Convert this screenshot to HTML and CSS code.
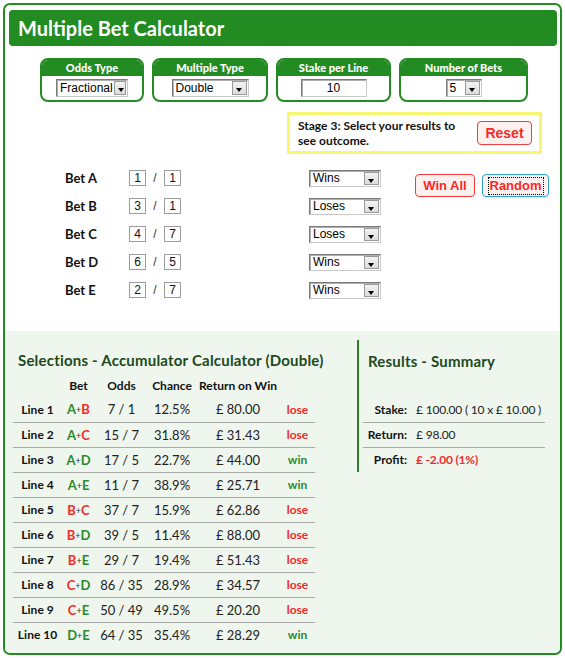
FILE: index.html
```html
<!DOCTYPE html>
<html>
<head>
<meta charset="utf-8">
<link rel="stylesheet" href="styles.css">
</head>
<body>
<div class="calc">
  <div class="header"><h1>Multiple Bet Calculator</h1></div>

  <div class="options">
    <div class="opt opt-1">
      <div class="opt-h">Odds Type</div>
      <div class="opt-b"><div class="sel sel-odds"><span class="sel-val">Fractional</span><span class="sel-btn"></span></div></div>
    </div>
    <div class="opt opt-2">
      <div class="opt-h">Multiple Type</div>
      <div class="opt-b"><div class="sel sel-mult"><span class="sel-val">Double</span><span class="sel-btn"></span></div></div>
    </div>
    <div class="opt opt-3">
      <div class="opt-h">Stake per Line</div>
      <div class="opt-b"><div class="stake">10</div></div>
    </div>
    <div class="opt opt-4">
      <div class="opt-h">Number of Bets</div>
      <div class="opt-b"><div class="sel sel-num"><span class="sel-val">5</span><span class="sel-btn"></span></div></div>
    </div>
  </div>

  <div class="stage-row">
    <div class="stage">
      <div class="stage-text">Stage 3: Select your results to see outcome.</div>
      <button class="btn btn-red btn-reset">Reset</button>
    </div>
  </div>

  <div class="bets-area">
    <div class="bet-list">
      <div class="bet-row"><span class="bet-label">Bet A</span><span class="frac"><span class="fin">1</span><span class="slash">/</span><span class="fin">1</span></span><div class="sel sel-res"><span class="sel-val">Wins</span><span class="sel-btn"></span></div></div>
      <div class="bet-row"><span class="bet-label">Bet B</span><span class="frac"><span class="fin">3</span><span class="slash">/</span><span class="fin">1</span></span><div class="sel sel-res"><span class="sel-val">Loses</span><span class="sel-btn"></span></div></div>
      <div class="bet-row"><span class="bet-label">Bet C</span><span class="frac"><span class="fin">4</span><span class="slash">/</span><span class="fin">7</span></span><div class="sel sel-res"><span class="sel-val">Loses</span><span class="sel-btn"></span></div></div>
      <div class="bet-row"><span class="bet-label">Bet D</span><span class="frac"><span class="fin">6</span><span class="slash">/</span><span class="fin">5</span></span><div class="sel sel-res"><span class="sel-val">Wins</span><span class="sel-btn"></span></div></div>
      <div class="bet-row"><span class="bet-label">Bet E</span><span class="frac"><span class="fin">2</span><span class="slash">/</span><span class="fin">7</span></span><div class="sel sel-res"><span class="sel-val">Wins</span><span class="sel-btn"></span></div></div>
    </div>
    <div class="actions">
      <button class="btn btn-red btn-winall">Win All</button>
      <button class="btn btn-blue btn-random"><span class="focus">Random</span></button>
    </div>
  </div>

  <div class="lower">
    <div class="sel-panel">
      <h2>Selections - Accumulator Calculator (Double)</h2>
      <table class="lines">
        <thead>
          <tr><th class="c-line"></th><th>Bet</th><th>Odds</th><th>Chance</th><th>Return on Win</th><th class="c-res"></th></tr>
        </thead>
        <tbody>
          <tr><td class="c-line">Line 1</td><td class="c-bet"><b class="g">A</b><i>+</i><b class="r">B</b></td><td>7 / 1</td><td>12.5%</td><td>£ 80.00</td><td class="c-res lose">lose</td></tr>
          <tr><td class="c-line">Line 2</td><td class="c-bet"><b class="g">A</b><i>+</i><b class="r">C</b></td><td>15 / 7</td><td>31.8%</td><td>£ 31.43</td><td class="c-res lose">lose</td></tr>
          <tr><td class="c-line">Line 3</td><td class="c-bet"><b class="g">A</b><i>+</i><b class="g">D</b></td><td>17 / 5</td><td>22.7%</td><td>£ 44.00</td><td class="c-res win">win</td></tr>
          <tr><td class="c-line">Line 4</td><td class="c-bet"><b class="g">A</b><i>+</i><b class="g">E</b></td><td>11 / 7</td><td>38.9%</td><td>£ 25.71</td><td class="c-res win">win</td></tr>
          <tr><td class="c-line">Line 5</td><td class="c-bet"><b class="r">B</b><i>+</i><b class="r">C</b></td><td>37 / 7</td><td>15.9%</td><td>£ 62.86</td><td class="c-res lose">lose</td></tr>
          <tr><td class="c-line">Line 6</td><td class="c-bet"><b class="r">B</b><i>+</i><b class="g">D</b></td><td>39 / 5</td><td>11.4%</td><td>£ 88.00</td><td class="c-res lose">lose</td></tr>
          <tr><td class="c-line">Line 7</td><td class="c-bet"><b class="r">B</b><i>+</i><b class="g">E</b></td><td>29 / 7</td><td>19.4%</td><td>£ 51.43</td><td class="c-res lose">lose</td></tr>
          <tr><td class="c-line">Line 8</td><td class="c-bet"><b class="r">C</b><i>+</i><b class="g">D</b></td><td>86 / 35</td><td>28.9%</td><td>£ 34.57</td><td class="c-res lose">lose</td></tr>
          <tr><td class="c-line">Line 9</td><td class="c-bet"><b class="r">C</b><i>+</i><b class="g">E</b></td><td>50 / 49</td><td>49.5%</td><td>£ 20.20</td><td class="c-res lose">lose</td></tr>
          <tr><td class="c-line">Line 10</td><td class="c-bet"><b class="g">D</b><i>+</i><b class="g">E</b></td><td>64 / 35</td><td>35.4%</td><td>£ 28.29</td><td class="c-res win">win</td></tr>
        </tbody>
      </table>
    </div>
    <div class="sum-panel">
      <h2 class="sum-h">Results - Summary</h2>
      <table class="summary">
        <tr><td class="s-label">Stake:</td><td class="s-val">£ 100.00 ( 10 x £ 10.00 )</td></tr>
        <tr><td class="s-label">Return:</td><td class="s-val">£ 98.00</td></tr>
        <tr><td class="s-label">Profit:</td><td class="s-val s-profit">£ -2.00 (1%)</td></tr>
      </table>
    </div>
  </div>
</div>
</body>
</html>
```

FILE: styles.css
```css
body {
  margin: 0;
  font-family: Lato, "DejaVu Sans", sans-serif;
  color: #111;
  background: #fff;
}

.calc {
  margin: 3px;
  width: 559px;
  height: 652px;
  box-sizing: border-box;
  border: 2px solid #228b22;
  border-radius: 7px;
  display: flex;
  flex-direction: column;
  overflow: hidden;
  background: #fff;
}

.header {
  margin: 5px 3px 0 4px;
  height: 36px;
  background: #228b22;
  border-radius: 4px;
  display: flex;
  align-items: center;
  padding-left: 9px;
}

.header h1 {
  margin: 0;
  color: #fff;
  font-size: 20px;
  font-weight: 700;
}

/* option boxes */
.options {
  display: flex;
  gap: 8px;
  padding-left: 35px;
  margin-top: 12px;
}

.opt {
  box-sizing: border-box;
  height: 44px;
  border: 2px solid #228b22;
  border-radius: 8px;
  overflow: hidden;
  background: #fff;
}
.opt-1 { width: 104px; }
.opt-2 { width: 116px; }
.opt-3 { width: 115px; }
.opt-4 { width: 129px; }

.opt-h {
  background: #228b22;
  color: #fff;
  font-size: 11px;
  font-weight: 900;
  text-align: center;
  height: 16px;
  line-height: 15px;
}

.opt-b {
  height: 24px;
  display: flex;
  justify-content: center;
  align-items: center;
}

/* fake select */
.sel {
  box-sizing: border-box;
  display: flex;
  align-items: stretch;
  height: 18px;
  border: 1px solid;
  border-color: #7a7a7a #c8c8c8 #c8c8c8 #7a7a7a;
  box-shadow: inset 1px 1px 0 #b0b0b0;
  background: #fff;
  font-family: "Liberation Sans", Arial, sans-serif;
  font-size: 12px;
  color: #000;
}
.sel-val {
  flex: 1;
  padding-left: 3px;
  line-height: 16px;
  white-space: nowrap;
}
.sel-btn {
  position: relative;
  width: 15px;
  margin: 1px;
  box-sizing: border-box;
  border: 1px solid #9a9a9a;
  background: linear-gradient(#f2f2f2, #dcdcdc);
}
.sel-btn::after {
  content: "";
  position: absolute;
  left: 3px;
  top: 6px;
  border-top: 4px solid #000;
  border-left: 3.5px solid transparent;
  border-right: 3.5px solid transparent;
}
.sel-odds { width: 72px; }
.sel-mult { width: 77px; }
.sel-num { width: 36px; }
.sel-res { width: 72px; height: 17px; }
.sel-res .sel-val { line-height: 15px; }

.stake {
  box-sizing: border-box;
  width: 66px;
  height: 18px;
  border: 1px solid;
  border-color: #7a7a7a #c8c8c8 #c8c8c8 #7a7a7a;
  box-shadow: inset 1px 1px 0 #b0b0b0;
  text-align: center;
  font-family: "Liberation Sans", Arial, sans-serif;
  font-size: 12px;
  line-height: 16px;
  color: #000;
}

/* stage box */
.stage-row {
  display: flex;
  justify-content: flex-end;
  margin: 10px 18px 0 0;
}
.stage {
  box-sizing: border-box;
  width: 255px;
  height: 42px;
  border: 3px solid #f6f670;
  display: flex;
  align-items: center;
  justify-content: space-between;
  padding: 0 7px 0 8px;
}
.stage-text {
  width: 170px;
  font-size: 12px;
  font-weight: 700;
  line-height: 15px;
  color: #111;
}

.btn {
  box-sizing: border-box;
  height: 23px;
  padding: 0;
  border-radius: 4px;
  background: #fcf1ef;
  color: #f42a2a;
  font-family: "Liberation Sans", Arial, sans-serif;
  font-size: 13px;
  font-weight: 700;
  cursor: pointer;
}
.btn-red { border: 1px solid #f23b3b; }
.btn-blue { border: 1px solid #2b9fd6; }
.btn-reset { width: 55px; height: 24px; font-size: 14px; }
.btn-winall { width: 60px; }
.btn-random { width: 67px; }
.focus {
  display: inline-block;
  outline: 1px dotted #000;
  padding: 0 1px;
  line-height: 16px;
}

/* bets */
.bets-area {
  display: flex;
  padding-left: 60px;
  margin-top: 10px;
}
.bet-list {
  display: flex;
  flex-direction: column;
}
.bet-row {
  display: grid;
  grid-template-columns: 64px 180px 72px;
  height: 28px;
  align-items: center;
}
.bet-label {
  font-size: 13px;
  font-weight: 700;
}
.frac {
  display: flex;
  align-items: center;
}
.fin {
  box-sizing: border-box;
  width: 17px;
  height: 16px;
  border: 1px solid #9c9c9c;
  text-align: center;
  font-family: "Liberation Sans", Arial, sans-serif;
  font-size: 12px;
  line-height: 14px;
}
.slash {
  width: 18px;
  text-align: center;
  font-family: "Liberation Sans", Arial, sans-serif;
  font-size: 12px;
  color: #333;
}
.actions {
  display: flex;
  gap: 7px;
  margin-left: 34px;
  margin-top: 10px;
  align-self: flex-start;
}

/* lower */
.lower {
  flex: 1;
  margin-top: 27px;
  background: #eff6ee;
  display: flex;
}
.sel-panel {
  width: 352px;
  box-sizing: border-box;
  padding: 20px 0 0 8px;
}
h2 {
  margin: 0;
  font-size: 15px;
  line-height: 18px;
  font-weight: 700;
  color: #1d4a1d;
  letter-spacing: 0.2px;
}
.sel-panel h2 { padding-left: 5px; }

.lines {
  margin-top: 4px;
  width: 302px;
  border-collapse: collapse;
  font-size: 13px;
  color: #222;
}
.lines th {
  height: 24px;
  padding: 0;
  font-size: 12px;
  font-weight: 700;
  color: #111;
  text-align: center;
}
.lines td {
  height: 25px;
  padding: 0;
  text-align: center;
  box-sizing: border-box;
}
.lines tbody tr + tr td { border-top: 1px solid #a9a9a9; }
.lines th:nth-child(1) { width: 49px; }
.lines th:nth-child(2) { width: 33px; }
.lines th:nth-child(3) { width: 53px; }
.lines th:nth-child(4) { width: 48px; }
.lines th:nth-child(5) { width: 84px; }
.lines th:nth-child(6) { width: 35px; }
.c-line {
  font-size: 12px;
  font-weight: 700;
  color: #111;
}
.c-bet b { font-weight: 700; }
.c-bet i {
  font-style: normal;
  font-size: 9px;
  color: #333;
  vertical-align: 1px;
}
.g { color: #2b8a2b; }
.r { color: #f42a2a; }
.c-res { font-size: 12px; font-weight: 700; }
.lose { color: #f42a2a; }
.win { color: #2b8a2b; }

.sum-panel {
  margin-top: 9px;
  height: 132px;
  box-sizing: border-box;
  border-left: 2px solid #2f7d2f;
  padding-left: 4px;
  align-self: flex-start;
}
.sum-h {
  padding: 12px 0 0 5px;
}
.summary {
  margin-top: 27px;
  width: 182px;
  table-layout: fixed;
  border-collapse: collapse;
  font-size: 12px;
  color: #222;
}
.summary td {
  height: 25px;
  padding: 0;
  box-sizing: border-box;
}
.summary tr + tr td { border-top: 1px solid #a9a9a9; }
.s-label {
  width: 44px;
  text-align: right;
  font-size: 12px;
  font-weight: 700;
  color: #111;
}
.s-val { padding-left: 9px !important; white-space: nowrap; letter-spacing: -0.2px; }
.s-profit { color: #f42a2a; font-weight: 700; }
```
